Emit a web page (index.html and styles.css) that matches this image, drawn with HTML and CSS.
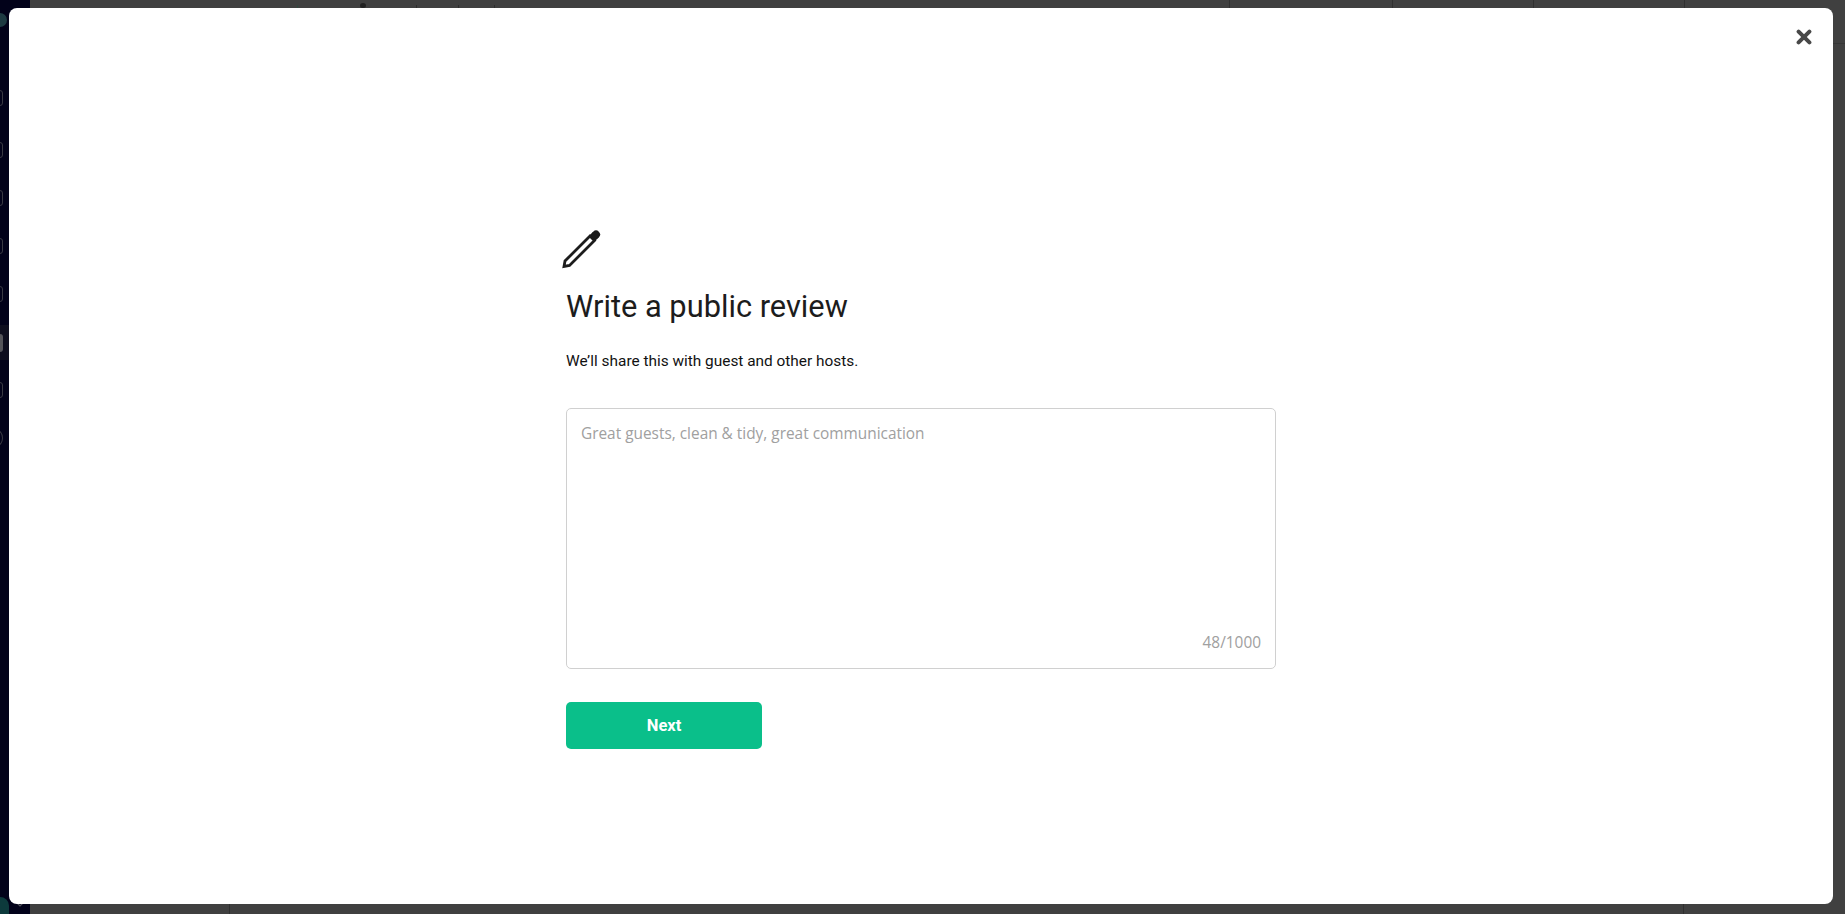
FILE: index.html
```html
<!DOCTYPE html>
<html lang="en">
<head>
<meta charset="utf-8">
<title>Write a public review</title>
<link rel="stylesheet" href="styles.css">
</head>
<body>
<div class="backdrop">
  <aside class="rail">
    <span class="rail-dot"></span>
    <span class="rail-icon rail-first"></span>
    <span class="rail-icon"></span>
    <span class="rail-icon"></span>
    <span class="rail-icon"></span>
    <span class="rail-icon"></span>
    <span class="rail-active"><span class="rail-block"></span></span>
    <span class="rail-icon"></span>
    <span class="rail-icon rail-round"></span>
    <div class="rail-foot">
      <span class="rail-avatar"></span>
      <svg class="rail-chevron" width="8" height="5" viewBox="0 0 8 5"><path d="M1 1 4 4 7 1" fill="none" stroke="#55555f" stroke-width="1.2"/></svg>
    </div>
  </aside>
  <div class="page-bg">
    <div class="top-cells">
      <span class="mark mark-green"></span>
      <span class="mark mark-dot"></span>
      <span class="mark mark-b"></span>
      <span class="mark mark-c"></span>
      <span class="mark mark-d"></span>
      <span class="cell cell-c"></span>
      <span class="cell cell-d"></span>
      <span class="cell cell-e"></span>
      <span class="cell cell-f"></span>
    </div>
    <div class="bottom-cells">
      <span class="cell cell-low-a"></span>
      <span class="cell cell-low-b"></span>
    </div>
  </div>
</div>
<main class="modal">
  <button class="close" type="button" aria-label="Close">
    <svg width="16" height="16" viewBox="0 0 16 16"><path d="M2.6 2.6 13.4 13.4M13.4 2.6 2.6 13.4" stroke="#484848" stroke-width="4" stroke-linecap="round" fill="none"/></svg>
  </button>
  <section class="content">
    <svg class="pencil" width="40" height="40" viewBox="0 0 40 40">
      <path d="M2 36.500 3 31 28 6 32.500 10.500 7.500 35.500Z" fill="none" stroke="#1c1c1c" stroke-width="2.800" stroke-linejoin="miter"/>
      <path d="M29.500 9 34 4.500" fill="none" stroke="#1c1c1c" stroke-width="8"/>
      <path d="M33.500 5 34 4.500" fill="none" stroke="#1c1c1c" stroke-width="8" stroke-linecap="round"/>
    </svg>
    <h1 class="title">Write a public review</h1>
    <p class="subtitle">We’ll share this with guest and other hosts.</p>
    <div class="field">
      <div class="placeholder">Great guests, clean &amp; tidy, great communication</div>
      <div class="counter">48/1000</div>
    </div>
    <button class="next" type="button">Next</button>
  </section>
</main>
</body>
</html>
```

FILE: styles.css
```css
* { box-sizing: border-box; }
html, body { margin: 0; height: 100%; overflow: hidden; }
body { background: #404040; font-family: Roboto, sans-serif; }

.backdrop { display: flex; height: 914px; }
.rail {
  width: 30px;
  background: #02021a;
  display: flex;
  flex-direction: column;
  align-items: flex-start;
  padding-top: 13px;
}
.rail-dot { width: 14px; height: 14px; margin-left: -7px; border-radius: 50%; background: #1d3a42; }
.rail-icon { width: 12px; height: 16px; margin: 0 0 32px -9px; border: 1px solid #3a3a44; border-radius: 3px; }
.rail-first { margin-top: 63px; margin-bottom: 36px; }
.rail-active {
  width: 30px;
  height: 35px;
  margin: -9px 0 22px;
  background: #0e0e1e;
  display: flex;
  align-items: center;
}
.rail-block { width: 12px; height: 18px; margin-left: -9px; background: #55555a; border-radius: 3px; }
.rail-round { border-radius: 50%; }
.rail-foot { margin-top: auto; display: flex; align-items: flex-end; gap: 7px; height: 17px; }
.rail-avatar { width: 18px; height: 17px; margin-left: -9px; border-radius: 50% 50% 0 0; background: #0d3a3c; }
.rail-chevron { margin-bottom: 7px; }

.page-bg {
  flex: 1;
  background: #404040;
  display: flex;
  flex-direction: column;
  justify-content: space-between;
}
.top-cells { display: flex; height: 44px; border-bottom: 1px solid #363636; }
.bottom-cells { display: flex; height: 10px; }
.cell { border-right: 1px solid #303030; }
.mark { width: 1px; height: 3px; margin-top: 5px; background: #2e2e2e; }
.mark-green { margin-left: 267px; background: #2f4a40; }
.mark-dot { margin-left: 62px; width: 6px; height: 5px; margin-top: 3px; border-radius: 50%; background: #222; }
.mark-b { margin-left: 50px; }
.mark-c { margin-left: 41px; }
.mark-d { margin-left: 35px; margin-right: 0; }
.cell-c { width: 735px; }
.cell-d { width: 163px; }
.cell-e { width: 141px; }
.cell-f { width: 151px; }
.cell-low-a { width: 200px; }
.cell-low-b { width: 1454px; }

.modal {
  position: absolute;
  left: 9px;
  top: 8px;
  width: 1824px;
  height: 896px;
  background: #fff;
  border-radius: 8px;
  display: flex;
  justify-content: center;
}
.close {
  position: absolute;
  right: 21px;
  top: 21px;
  width: 16px;
  height: 16px;
  padding: 0;
  border: 0;
  background: none;
  display: flex;
}
.content { width: 710px; padding-top: 222px; }
.pencil { display: block; margin-left: -4px; }
.title {
  margin: 17px 0 0;
  font-size: 30.8px;
  line-height: 40px;
  font-weight: 400;
  color: #1c1c1c;
}
.subtitle {
  margin: 24px 0 0;
  font-size: 15.4px;
  line-height: 20px;
  color: #111;
}
.field {
  margin-top: 37px;
  height: 261px;
  border: 1px solid #d0d0d0;
  border-radius: 5px;
  padding: 14px;
  display: flex;
  flex-direction: column;
  justify-content: space-between;
  font-family: "Open Sans", sans-serif;
  font-size: 15.4px;
  line-height: 22px;
  color: #a0a0a0;
}
.counter { text-align: right; }
.next {
  display: block;
  margin-top: 33px;
  width: 196px;
  height: 47px;
  border: 0;
  border-radius: 5px;
  background: #0abf8a;
  color: #fff;
  font-family: Roboto, sans-serif;
  font-size: 16.5px;
  font-weight: 700;
}
```
